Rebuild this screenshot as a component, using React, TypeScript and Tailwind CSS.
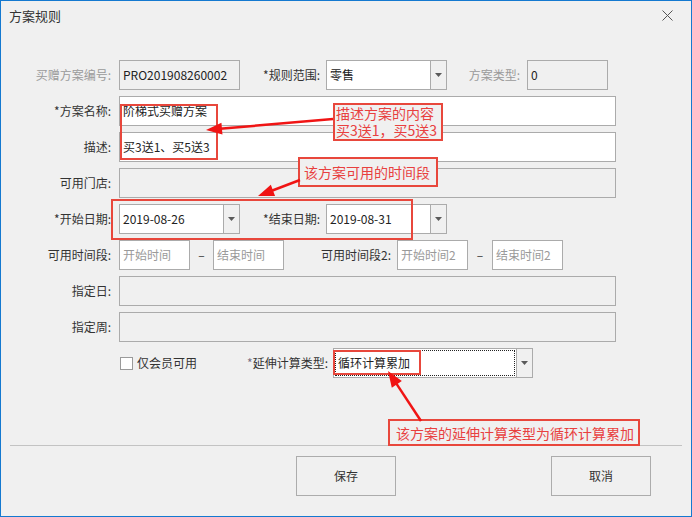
import React from "react";

function Tri() {
  return (
    <svg width="7" height="4" viewBox="0 0 7 4">
      <polygon points="0,0 7,0 3.5,4" fill="#5a5a5a" />
    </svg>
  );
}

function Select({ cls, text, focus }: { cls: string; text: string; focus?: boolean }) {
  return (
    <div className={`flex h-[30px] border border-[#ababab] bg-white ${cls}`}>
      <div className="flex-1 flex items-stretch">
        {focus ? (
          <div className="flex-1 m-[1px] border border-dotted border-[#222] flex items-center pl-[2px] text-[#222]">{text}</div>
        ) : (
          <div className="flex-1 flex items-center pl-[3px] text-[#222]">{text}</div>
        )}
      </div>
      <div className="w-[16px] border-l border-[#ababab] bg-[#f0f0f0] flex items-center justify-center">
        <Tri />
      </div>
    </div>
  );
}

function Box({ cls, text, placeholder, disabled }: { cls: string; text?: string; placeholder?: string; disabled?: boolean }) {
  return (
    <div
      className={`h-[30px] border border-[#ababab] flex items-center pl-[3px] ${disabled ? "bg-[#f0f0f0]" : "bg-white"} ${cls}`}
    >
      {text ? <span className="text-[#222]">{text}</span> : null}
      {placeholder ? <span className="text-[#9a9a9a]">{placeholder}</span> : null}
    </div>
  );
}

function Label({ cls, text, gray }: { cls: string; text: string; gray?: boolean }) {
  return (
    <div className={`text-right ${gray ? "text-[#9a9a9a]" : "text-[#333]"} ${cls}`}>{text}</div>
  );
}

function Arrow({ x1, y1, x2, y2 }: { x1: number; y1: number; x2: number; y2: number }) {
  const dx = x2 - x1;
  const dy = y2 - y1;
  const len = Math.hypot(dx, dy);
  const ux = dx / len;
  const uy = dy / len;
  const hl = 16;
  const hw = 6;
  const bx = x2 - ux * hl;
  const by = y2 - uy * hl;
  const px = -uy;
  const py = ux;
  const pts = `${x2},${y2} ${bx + px * hw},${by + py * hw} ${bx - px * hw},${by - py * hw}`;
  return (
    <g>
      <line x1={x1} y1={y1} x2={bx + ux * 2} y2={by + uy * 2} stroke="#f01414" strokeWidth="2.5" />
      <polygon points={pts} fill="#f01414" />
    </g>
  );
}

export default function App() {
  return (
    <div className="w-[692px] h-[517px] border border-[#1479d0] bg-[#f0f0f0] relative overflow-hidden font-['Noto_Sans_CJK_SC','Noto_Sans',sans-serif] text-[12px] leading-[16px]">
      {/* Title bar */}
      <div className="h-[59px] flex justify-between items-start pl-[8px] pr-[18px]">
        <div className="pt-[6px] text-[13px] leading-[17px] text-[#333]">方案规则</div>
        <svg width="11" height="11" viewBox="0 0 11 11" className="mt-[9px]">
          <path d="M0.5 0.5 L10.5 10.5 M10.5 0.5 L0.5 10.5" stroke="#555" strokeWidth="1" />
        </svg>
      </div>

      {/* Form */}
      <div className="flex flex-col gap-[6px]">
        <div className="flex items-center h-[30px]">
          <Label cls="w-[110px] mr-[8px]" text="买赠方案编号:" gray />
          <Box cls="w-[121px]" text="PRO201908260002" disabled />
          <Label cls="w-[80px] mr-[6px]" text="*规则范围:" />
          <Select cls="w-[121px]" text="零售" />
          <Label cls="w-[73px] mr-[7px]" text="方案类型:" gray />
          <Box cls="w-[81px]" text="0" disabled />
        </div>
        <div className="flex items-center h-[30px]">
          <Label cls="w-[110px] mr-[8px]" text="*方案名称:" />
          <Box cls="w-[497px]" text="阶梯式买赠方案" />
        </div>
        <div className="flex items-center h-[30px]">
          <Label cls="w-[110px] mr-[8px]" text="描述:" />
          <Box cls="w-[497px]" text="买3送1、买5送3" />
        </div>
        <div className="flex items-center h-[30px]">
          <Label cls="w-[110px] mr-[8px]" text="可用门店:" />
          <Box cls="w-[497px]" disabled />
        </div>
        <div className="flex items-center h-[30px]">
          <Label cls="w-[110px] mr-[8px]" text="*开始日期:" />
          <Select cls="w-[121px]" text="2019-08-26" />
          <Label cls="w-[80px] mr-[6px]" text="*结束日期:" />
          <Select cls="w-[121px]" text="2019-08-31" />
        </div>
        <div className="flex items-center h-[30px]">
          <Label cls="w-[110px] mr-[8px]" text="可用时间段:" />
          <Box cls="w-[71px]" placeholder="开始时间" />
          <div className="w-[23px] text-center text-[#333]">–</div>
          <Box cls="w-[71px]" placeholder="结束时间" />
          <Label cls="w-[107px] mr-[6px]" text="可用时间段2:" />
          <Box cls="w-[71px]" placeholder="开始时间2" />
          <div className="w-[24px] text-center text-[#333]">–</div>
          <Box cls="w-[71px]" placeholder="结束时间2" />
        </div>
        <div className="flex items-center h-[30px]">
          <Label cls="w-[110px] mr-[8px]" text="指定日:" />
          <Box cls="w-[497px]" disabled />
        </div>
        <div className="flex items-center h-[30px]">
          <Label cls="w-[110px] mr-[8px]" text="指定周:" />
          <Box cls="w-[497px]" disabled />
        </div>
        <div className="flex items-center h-[30px]">
          <div className="w-[119px]" />
          <div className="w-[120px] flex items-center">
            <div className="w-[13px] h-[13px] border border-[#9a9a9a] bg-white" />
            <span className="ml-[4px] text-[#333]">仅会员可用</span>
          </div>
          <div className="w-[88px] text-right mr-[5px] text-[#333]">
            <span className="text-[#7a6f86]">*</span>延伸计算类型:
          </div>
          <Select cls="w-[200px]" text="循环计算累加" focus />
        </div>
      </div>

      {/* Separator */}
      <div className="mt-[67px] ml-[9px] w-[672px] h-[1px] bg-[#c3c3c3]" />

      {/* Buttons */}
      <div className="flex mt-[10px] ml-[295px]">
        <div className="w-[100px] h-[40px] border border-[#acacac] bg-[#f0f0f0] flex items-center justify-center text-[#333]">
          保存
        </div>
        <div className="ml-[155px] w-[100px] h-[40px] border border-[#acacac] bg-[#f0f0f0] flex items-center justify-center text-[#333]">
          取消
        </div>
      </div>

      {/* Annotations */}
      <div className="absolute left-[119px] top-[103px] w-[98px] h-[56px] border-2 border-[#e8473c]" />
      <div className="absolute left-[332px] top-[102px] w-[110px] h-[38px] border-2 border-[#e8473c] bg-[#f0f0f0] pl-[1px] text-[14px] leading-[17px] text-[#e8403f]">
        <div>描述方案的内容</div>
        <div>买3送1，买5送3</div>
      </div>
      <div className="absolute left-[297px] top-[156px] w-[140px] h-[30px] border-2 border-[#e8473c] bg-[#f0f0f0] flex items-center pl-[4px] text-[14px] leading-[16px] text-[#e8403f]">
        该方案可用的时间段
      </div>
      <div className="absolute left-[110px] top-[198px] w-[302px] h-[41px] border-2 border-[#e8473c]" />
      <div className="absolute left-[332px] top-[349px] w-[88px] h-[25px] border-2 border-[#e8473c]" />
      <div className="absolute left-[387px] top-[418px] w-[252px] h-[27px] border-2 border-[#e8473c] bg-[#f0f0f0] flex items-center pl-[6px] text-[14px] leading-[16px] text-[#e8403f]">
        该方案的延伸计算类型为循环计算累加
      </div>

      <svg className="absolute left-0 top-0 pointer-events-none" width="690" height="515" viewBox="1 1 690 515">
        <Arrow x1={333} y1={119} x2={206} y2={130} />
        <Arrow x1={300} y1={180} x2={258} y2={196} />
        <Arrow x1={421} y1={421} x2={388} y2={371} />
      </svg>
    </div>
  );
}
